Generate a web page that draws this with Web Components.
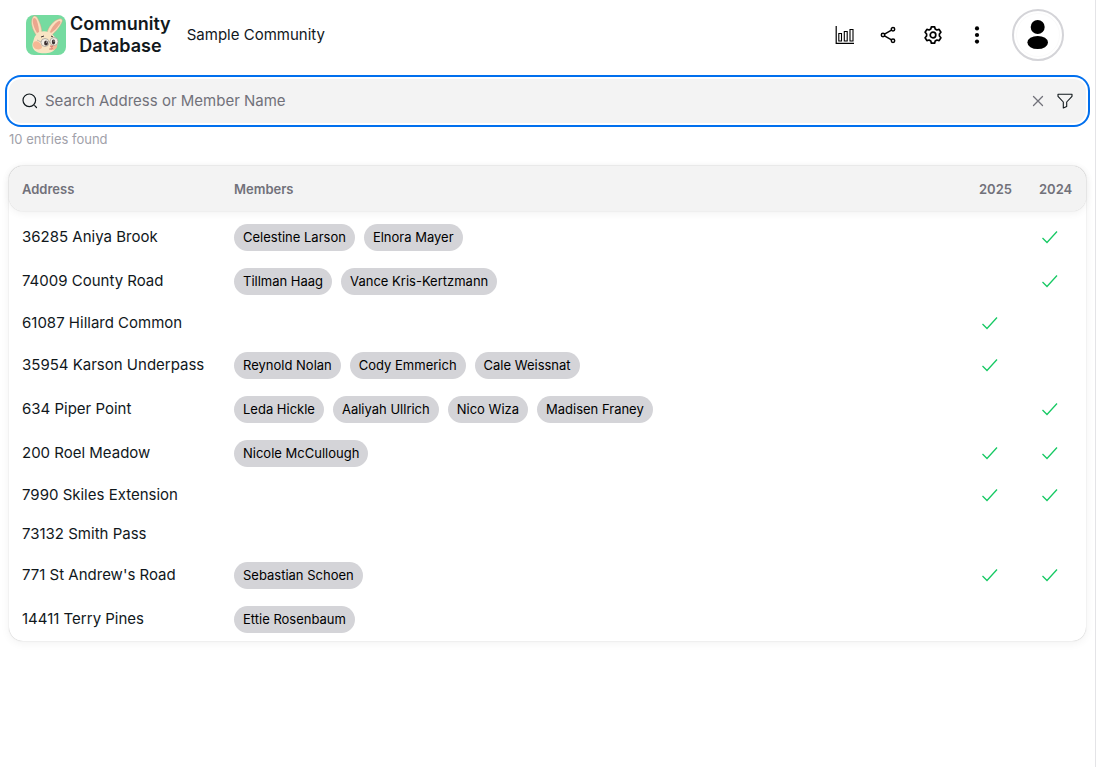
<!DOCTYPE html>
<html lang="en">
<head>
<meta charset="utf-8">
<meta name="viewport" content="width=device-width, initial-scale=1">
<title>Community Database</title>
<style>
  html, body { height: 100%; }
  body {
    margin: 0;
    background: #fff;
    color: #11181c;
    font-family: Inter, "Liberation Sans", sans-serif;
    font-size: 15px;
    line-height: 20px;
  }
</style>
</head>
<body>
<community-app>
  <app-header slot="header" community="Sample Community"></app-header>
  <search-bar placeholder="Search Address or Member Name"></search-bar>
  <entry-count count="10"></entry-count>
  <property-table></property-table>
</community-app>

<script>
const ENTRIES = [
  { address: '36285 Aniya Brook', members: ['Celestine Larson', 'Elnora Mayer'], years: [2024] },
  { address: '74009 County Road', members: ['Tillman Haag', 'Vance Kris-Kertzmann'], years: [2024] },
  { address: '61087 Hillard Common', members: [], years: [2025] },
  { address: '35954 Karson Underpass', members: ['Reynold Nolan', 'Cody Emmerich', 'Cale Weissnat'], years: [2025] },
  { address: '634 Piper Point', members: ['Leda Hickle', 'Aaliyah Ullrich', 'Nico Wiza', 'Madisen Franey'], years: [2024] },
  { address: '200 Roel Meadow', members: ['Nicole McCullough'], years: [2025, 2024] },
  { address: '7990 Skiles Extension', members: [], years: [2025, 2024] },
  { address: '73132 Smith Pass', members: [], years: [] },
  { address: "771 St Andrew's Road", members: ['Sebastian Schoen'], years: [2025, 2024] },
  { address: '14411 Terry Pines', members: ['Ettie Rosenbaum'], years: [] },
];
const YEARS = [2025, 2024];

class BaseElement extends HTMLElement {
  connectedCallback() {
    if (this.shadowRoot) return;
    const template = document.createElement('template');
    template.innerHTML = `<style>${this.css}</style>${this.html}`;
    this.attachShadow({ mode: 'open' }).appendChild(template.content.cloneNode(true));
  }
}

class CommunityApp extends BaseElement {
  css = `
    :host {
      display: flex;
      flex-direction: column;
      box-sizing: border-box;
      min-height: 100%;
      border-right: 1px solid #e4e4e7;
    }
    main { display: block; padding: 9px 9px 24px; }
  `;
  html = `<slot name="header"></slot><main><slot></slot></main>`;
}
customElements.define('community-app', CommunityApp);

class BunnyLogo extends BaseElement {
  css = `
    :host { display: block; flex: none; }
    svg { display: block; width: 40px; height: 40px; border-radius: 8px; }
  `;
  html = `
    <svg viewBox="0 0 40 40" aria-hidden="true">
      <rect width="40" height="40" fill="#75dba0"/>
      <path d="M11 21C6 15 4 6 7 2c1-2 4-1 5 2 2 4 4 9 4 15Z" fill="#f9dfbd" stroke="#d2a487" stroke-width=".5"/>
      <path d="M11 18C8 13 6 7 7 4c1-2 3-1 4 2 1 3 2 7 2 11Z" fill="#eba68e"/>
      <path d="M21 18c1-6 7-13 12-14 4-1 4 2 2 5-2 4-6 8-9 11Z" fill="#f9dfbd" stroke="#d2a487" stroke-width=".5"/>
      <path d="M24 17c2-5 6-10 9-11 2 0 2 2 0 4-2 3-5 6-8 8Z" fill="#eba68e"/>
      <path d="M10 20c4-5 12-5 17 0 4 4 6 9 3 13-3 5-10 6-16 5C8 37 5 32 7 27c1-3 1-5 3-7Z" fill="#f9e4c3"/>
      <path d="M8 27c3-2 7 1 8 5 0 2-3 3-6 2-3-1-4-5-2-7Z" fill="#f2aa86" opacity=".75"/>
      <path d="M25 32c2-2 5-4 6-2 1 3-2 5-5 5-2 0-2-2-1-3Z" fill="#f2aa86" opacity=".75"/>
      <path d="M15 22l3-1M25 21l2 1" stroke="#3c3031" stroke-width="1"/>
      <circle cx="19" cy="27.5" r="4" fill="#f4eee5" stroke="#a7a199" stroke-width=".8"/>
      <circle cx="28" cy="26.5" r="4" fill="#f4eee5" stroke="#a7a199" stroke-width=".8"/>
      <path d="M23 27h1M15 27l-4-2" fill="none" stroke="#a7a199" stroke-width=".7"/>
      <ellipse cx="20" cy="28" rx="1.9" ry="2.5" fill="#3c3031"/>
      <ellipse cx="27.5" cy="27" rx="1.7" ry="2.4" fill="#3c3031"/>
      <circle cx="20.5" cy="27" r=".6" fill="#fff"/>
      <circle cx="28" cy="26" r=".6" fill="#fff"/>
      <path d="M24 31l3-.3-1 1.7ZM23 34q3 1 4-1" fill="#e37f78" stroke="#c7776f" stroke-width=".6"/>
    </svg>
  `;
}
customElements.define('bunny-logo', BunnyLogo);

class IconButton extends BaseElement {
  css = `
    :host { display: block; flex: none; }
    button {
      display: flex;
      align-items: center;
      justify-content: center;
      width: 44px;
      height: 40px;
      padding: 0;
      border: 0;
      background: none;
      color: #000;
      cursor: pointer;
    }
  `;
  get html() {
    return `<button type="button" aria-label="${this.getAttribute('label')}"><slot></slot></button>`;
  }
}
customElements.define('icon-button', IconButton);

class UserAvatar extends BaseElement {
  css = `
    :host { display: block; flex: none; }
    button {
      display: block;
      box-sizing: border-box;
      width: 52px;
      height: 52px;
      padding: 0;
      border: 2px solid #d4d4d8;
      border-radius: 50%;
      background: #fff;
      cursor: pointer;
    }
    svg { display: block; width: 48px; height: 48px; }
  `;
  html = `
    <button type="button" aria-label="Account">
      <svg viewBox="0 0 48 48" aria-hidden="true">
        <circle cx="24" cy="24" r="21.5" fill="none" stroke="#f4f4f5" stroke-width=".5"/>
        <circle cx="23.7" cy="16" r="7" />
        <ellipse cx="23.7" cy="31.5" rx="10.3" ry="6.6" />
      </svg>
    </button>
  `;
}
customElements.define('user-avatar', UserAvatar);

class AppHeader extends BaseElement {
  css = `
    :host { display: block; }
    header {
      display: flex;
      align-items: center;
      height: 70px;
      padding: 0 31px 0 26px;
    }
    .brand {
      display: flex;
      align-items: center;
      gap: 4px;
      color: inherit;
      text-decoration: none;
    }
    .name {
      font-size: 18px;
      line-height: 22px;
      font-weight: 600;
      text-align: center;
    }
    .community { margin-left: 16px; white-space: nowrap; }
    nav { display: flex; align-items: center; margin-left: auto; }
    user-avatar { margin-left: 13px; }
    svg { display: block; width: 20px; height: 20px; }
  `;
  get html() {
    return `
      <header>
        <a class="brand" href="#">
          <bunny-logo></bunny-logo>
          <span class="name">Community<br>Database</span>
        </a>
        <span class="community">${this.getAttribute('community')}</span>
        <nav>
          <icon-button label="Dashboard">
            <svg viewBox="0 0 20 20" fill="none" stroke="currentColor">
              <path d="M1.2 1v17.4H19" stroke-width="1.2"/>
              <path d="M3.8 8.5h2.7V16H3.8ZM9.3 6.5h2.9V16H9.3ZM15 4.5h3V16h-3Z" stroke-width="1.1"/>
            </svg>
          </icon-button>
          <icon-button label="Share">
            <svg viewBox="0 0 20 20" fill="none" stroke="currentColor" stroke-width="1.5">
              <circle cx="14" cy="4.2" r="1.7"/>
              <circle cx="4" cy="10" r="1.7"/>
              <circle cx="14" cy="15.8" r="1.7"/>
              <path d="m5.5 9.1 7-4M5.5 10.9l7 4"/>
            </svg>
          </icon-button>
          <icon-button label="Settings">
            <svg viewBox="0 0 20 20" fill="none" stroke="currentColor" stroke-width="1.7" stroke-linejoin="round">
              <circle cx="10" cy="10" r="2.8"/>
              <path d="M8.4 1.8h3.2l.6 2.2 1.7 1 2.2-.6 1.8 2.9-1.5 1.7v2l1.5 1.7-1.8 2.9-2.2-.6-1.7 1-.6 2.2H8.4L7.8 16l-1.7-1-2.2.6-1.8-2.9L3.6 11V9L2.1 7.3l1.8-2.9 2.2.6 1.7-1Z"/>
            </svg>
          </icon-button>
          <icon-button label="More">
            <svg viewBox="0 0 20 20" fill="currentColor">
              <circle cx="10" cy="3.4" r="2.1"/>
              <circle cx="10" cy="10" r="2.1"/>
              <circle cx="10" cy="16.6" r="2.1"/>
            </svg>
          </icon-button>
          <user-avatar></user-avatar>
        </nav>
      </header>
    `;
  }
}
customElements.define('app-header', AppHeader);

class SearchBar extends BaseElement {
  css = `
    :host {
      display: flex;
      align-items: center;
      box-sizing: border-box;
      height: 44px;
      padding: 0 13px;
      border-radius: 12px;
      background: #f3f3f3;
      box-shadow: 0 0 0 2px #fff, 0 0 0 4px #006fee;
    }
    label { display: flex; padding-right: 7px; }
    input {
      flex: 1;
      min-width: 0;
      height: 32px;
      padding: 0 0 1px;
      border: 0;
      outline: none;
      background: none;
      color: #11181c;
      font: inherit;
    }
    input::placeholder { color: #71717a; opacity: 1; }
    button {
      display: flex;
      padding: 0;
      border: 0;
      background: none;
      color: #11181c;
      cursor: pointer;
    }
    .clear { margin-right: 11px; color: #71717a; }
    svg { display: block; width: 16px; height: 16px; }
  `;
  get html() {
    return `
      <label for="query" aria-label="Search">
        <svg viewBox="0 0 16 16" fill="none" stroke="currentColor" stroke-width="1.2" stroke-linecap="round">
          <circle cx="7.3" cy="7.3" r="6.3"/>
          <path d="m12.7 12.7 1.8 1.8"/>
        </svg>
      </label>
      <input id="query" type="text" placeholder="${this.getAttribute('placeholder')}">
      <button class="clear" type="button" aria-label="Clear">
        <svg viewBox="0 0 16 16" fill="none" stroke="currentColor" stroke-width="1.3" stroke-linecap="round">
          <path d="m3.5 3.5 9 9M12.5 3.5l-9 9"/>
        </svg>
      </button>
      <button type="button" aria-label="Filter">
        <svg viewBox="0 0 16 16" fill="none" stroke="currentColor" stroke-width="1.1" stroke-linejoin="round">
          <path d="M1 1.3h14v2L9.7 9v4.5L6.3 15V9L1 3.3Z"/>
        </svg>
      </button>
    `;
  }
}
customElements.define('search-bar', SearchBar);

class EntryCount extends BaseElement {
  css = `
    :host {
      display: block;
      padding: 6px 0 17px;
      color: #a1a1aa;
      font-size: 13px;
    }
  `;
  get html() {
    return `<span>${this.getAttribute('count')} entries found</span>`;
  }
}
customElements.define('entry-count', EntryCount);

class MemberChip extends BaseElement {
  css = `
    :host {
      display: block;
      padding: 0 9px;
      border-radius: 14px;
      background: #d4d4d8;
      color: #000;
      font-size: 13px;
      line-height: 27px;
      white-space: nowrap;
    }
  `;
  html = `<slot></slot>`;
}
customElements.define('member-chip', MemberChip);

class PaidCheck extends BaseElement {
  css = `
    :host { display: block; width: 20px; }
    svg { display: block; width: 20px; height: 20px; }
  `;
  html = `
    <svg viewBox="0 0 20 20" role="img" aria-label="Paid" fill="none" stroke="#17c964" stroke-width="1.3">
      <path d="m3.5 11 4.5 4.5L18 4.5"/>
    </svg>
  `;
}
customElements.define('paid-check', PaidCheck);

class PropertyTable extends BaseElement {
  css = `
    :host {
      display: block;
      border-radius: 14px;
      background: #fff;
      box-shadow: 0 0 1px rgba(0, 0, 0, .3), 0 2px 10px rgba(0, 0, 0, .06);
    }
    table { width: 100%; border-collapse: separate; border-spacing: 0; }
    th, td { padding: 0 13px; text-align: left; white-space: nowrap; }
    th {
      height: 45px;
      background: #f3f3f3;
      color: #71717a;
      font-size: 13px;
      font-weight: 600;
    }
    thead { border-radius: 14px; box-shadow: 0 0 1px rgba(0, 0, 0, .3), 0 2px 8px rgba(0, 0, 0, .06); }
    th:first-child { min-width: 186px; border-radius: 14px 0 0 14px; }
    th:last-child { border-radius: 0 14px 14px 0; }
    .year { min-width: 34px; }
    tbody::before { content: ''; display: block; height: 4px; }
    td { height: 38px; }
    .paid td { height: 40px; }
    .occupied td { height: 44px; }
    .members { width: 100%; }
    .chips { display: flex; gap: 9px; }
  `;
  get html() {
    const head = YEARS.map(year => `<th scope="col" class="year">${year}</th>`).join('');
    return `
      <table>
        <thead>
          <tr><th scope="col">Address</th><th scope="col" class="members">Members</th>${head}</tr>
        </thead>
        <tbody>${ENTRIES.map(entry => this.#row(entry)).join('')}</tbody>
      </table>
    `;
  }

  #row({ address, members, years }) {
    const state = members.length ? 'occupied' : years.length ? 'paid' : '';
    const chips = members.map(name => `<member-chip>${name}</member-chip>`).join('');
    const paid = YEARS.map(year => `<td>${years.includes(year) ? '<paid-check></paid-check>' : ''}</td>`).join('');
    return `
      <tr class="${state}">
        <td>${address}</td>
        <td><div class="chips">${chips}</div></td>
        ${paid}
      </tr>
    `;
  }
}
customElements.define('property-table', PropertyTable);
</script>
</body>
</html>
